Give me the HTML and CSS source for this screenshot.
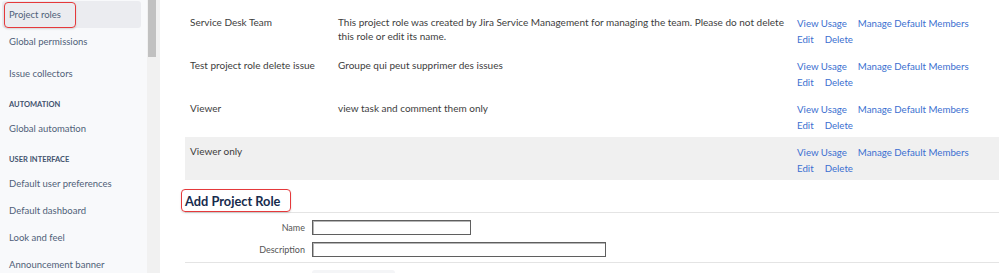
FILE: index.html
```html
<!DOCTYPE html>
<html lang="en">
<head>
    <meta charset="UTF-8">
    <meta name="viewport" content="width=device-width, initial-scale=1.0">
    <title>Project roles</title>
    <link rel="stylesheet" href="styles.css">
</head>
<body>
    <div class="page">
        <aside class="sidebar">
            <nav class="side-nav">
                <a class="side-item active" href="#"><span class="marked marked-nav">Project roles</span></a>
                <a class="side-item" href="#">Global permissions</a>
                <a class="side-item spaced" href="#">Issue collectors</a>
                <div class="side-head">AUTOMATION</div>
                <a class="side-item" href="#">Global automation</a>
                <div class="side-head">USER INTERFACE</div>
                <a class="side-item" href="#">Default user preferences</a>
                <a class="side-item" href="#">Default dashboard</a>
                <a class="side-item" href="#">Look and feel</a>
                <a class="side-item" href="#">Announcement banner</a>
            </nav>
        </aside>
        <div class="scrollbar"><div class="scrollbar-thumb"></div></div>
        <main class="content">
            <table class="roles">
                <colgroup>
                    <col class="col-name">
                    <col class="col-desc">
                    <col>
                </colgroup>
                <tr>
                    <td>Service Desk Team</td>
                    <td>This project role was created by Jira Service Management for managing the team. Please do not delete this role or edit its name.</td>
                    <td>
                        <div class="ops"><a href="#">View Usage</a><a href="#">Manage Default Members</a></div>
                        <div class="ops"><a href="#">Edit</a><a href="#">Delete</a></div>
                    </td>
                </tr>
                <tr>
                    <td>Test project role delete issue</td>
                    <td>Groupe qui peut supprimer des issues</td>
                    <td>
                        <div class="ops"><a href="#">View Usage</a><a href="#">Manage Default Members</a></div>
                        <div class="ops"><a href="#">Edit</a><a href="#">Delete</a></div>
                    </td>
                </tr>
                <tr>
                    <td>Viewer</td>
                    <td>view task and comment them only</td>
                    <td>
                        <div class="ops"><a href="#">View Usage</a><a href="#">Manage Default Members</a></div>
                        <div class="ops"><a href="#">Edit</a><a href="#">Delete</a></div>
                    </td>
                </tr>
                <tr class="hover">
                    <td>Viewer only</td>
                    <td></td>
                    <td>
                        <div class="ops"><a href="#">View Usage</a><a href="#">Manage Default Members</a></div>
                        <div class="ops"><a href="#">Edit</a><a href="#">Delete</a></div>
                    </td>
                </tr>
            </table>

            <section class="add-role">
                <h2 class="add-title"><span class="marked marked-title">Add Project Role</span></h2>
                <form class="add-form">
                    <div class="field">
                        <label for="roleName">Name</label>
                        <input type="text" id="roleName" class="text-short caret">
                    </div>
                    <div class="field">
                        <label for="roleDesc">Description</label>
                        <input type="text" id="roleDesc" class="text-long">
                    </div>
                    <div class="form-actions">
                        <button type="submit" class="btn" aria-label="Add"></button>
                    </div>
                </form>
            </section>
        </main>
    </div>
</body>
</html>
```

FILE: styles.css
```css
html, body {
    margin: 0;
    padding: 0;
    overflow: hidden;
    background: #fff;
}
body {
    font-family: Lato, "Open Sans", sans-serif;
    font-size: 10px;
    color: #3d3d3d;
}
.page {
    display: flex;
    height: 273px;
}

/* sidebar */
.sidebar {
    width: 147px;
    flex: none;
    background: #f8f9fb;
}
.side-nav {
    display: flex;
    flex-direction: column;
    padding-top: 1px;
}
.side-item {
    display: block;
    height: 27px;
    line-height: 27px;
    margin: 0 6px 0 2px;
    padding-left: 7px;
    color: #505f79;
    text-decoration: none;
    font-size: 9.5px;
    border-radius: 3px;
}
.side-item.active {
    background: #ebecf0;
}
.side-item.spaced {
    margin-top: 5px;
}
.side-head {
    padding: 13px 0 5px 9px;
    line-height: 10px;
    font-size: 7.5px;
    font-weight: 700;
    color: #42526e;
}

/* red annotation boxes */
.marked {
    position: relative;
}
.marked::after {
    content: "";
    position: absolute;
    border: 1.5px solid #e5393b;
    border-radius: 4px;
    box-shadow: 0 1px 2px rgba(0, 0, 0, 0.15);
}
.marked-nav::after {
    left: -5px;
    right: -15px;
    top: -7px;
    bottom: -8px;
}
.marked-title::after {
    left: -4px;
    right: -11px;
    top: -4px;
    bottom: -3px;
}

.scrollbar {
    width: 13px;
    flex: none;
    background: #f1f1f1;
}
.scrollbar-thumb {
    width: 8px;
    height: 57px;
    margin-left: 1px;
    background: #c1c1c1;
}

/* main */
.content {
    flex: 1;
    padding: 8px 0 0 25px;
    min-width: 0;
}
.roles {
    width: 100%;
    border-collapse: collapse;
    table-layout: fixed;
}
.roles td {
    height: 43px;
    padding: 7px 5px 0 5px;
    vertical-align: top;
    box-sizing: border-box;
    line-height: 14px;
}
.roles tr.hover td {
    background: #f0f0f0;
}
.col-name {
    width: 148px;
}
.col-desc {
    width: 459px;
}
.ops {
    line-height: 16px;
    white-space: nowrap;
    font-size: 9.7px;
}
.ops a {
    color: #3b6fd0;
    text-decoration: none;
    margin-right: 11px;
}

/* add form */
.add-role {
    padding-top: 10px;
}
.add-title {
    margin: 0;
    height: 22px;
    line-height: 22px;
    font-size: 12.8px;
    font-weight: 700;
    color: #172b4d;
    border-bottom: 1px solid #e4e4e4;
}
.add-form {
    padding-top: 3px;
}
.field {
    display: flex;
    align-items: center;
    height: 22px;
}
.field label {
    width: 120px;
    padding-right: 7px;
    text-align: right;
    color: #555;
    font-size: 9px;
}
.field input {
    box-sizing: border-box;
    height: 15px;
    padding: 0;
    border: 1px solid #5f5f5f;
    box-shadow: inset 1px 1px 0 #b5b5b5;
    background: #fff;
}
.text-short {
    width: 159px;
}
.text-long {
    width: 294px;
}
.caret {
    background: linear-gradient(#222, #222) no-repeat 4px 2px / 1px 9px;
}
.form-actions {
    margin-top: 2px;
    border-top: 1px solid #e4e4e4;
    padding: 7px 0 0 127px;
}
.btn {
    width: 83px;
    height: 22px;
    border: none;
    border-radius: 3px;
    background: #f4f5f7;
}
```
